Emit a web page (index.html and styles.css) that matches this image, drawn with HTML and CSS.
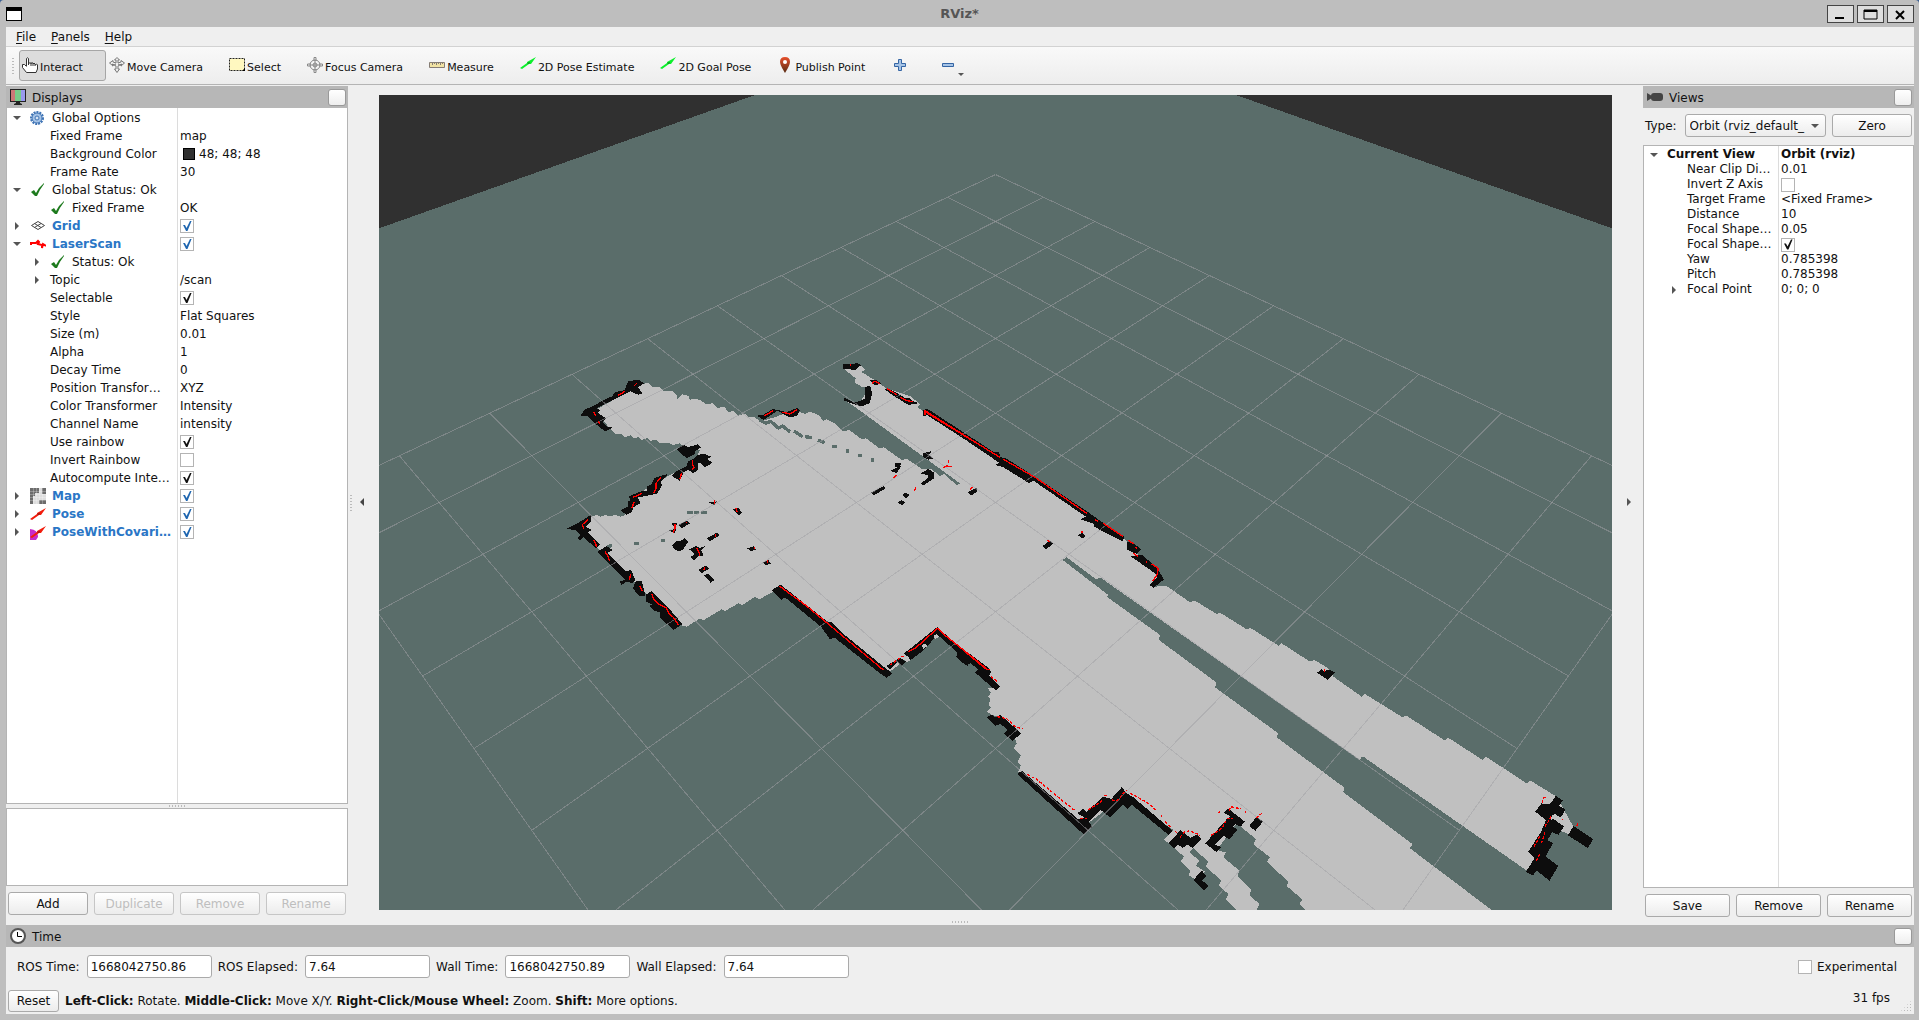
FILE: index.html
```html
<!DOCTYPE html>
<html lang="en">
<head>
  <meta charset="UTF-8">
  <meta name="viewport" content="width=device-width, initial-scale=1.0">
  <title>RViz*</title>
  <link rel="stylesheet" href="styles.css">
</head>
<body>
  <!-- shared icons -->
  <svg class="defs" width="0" height="0" aria-hidden="true">
    <symbol id="i-check" viewBox="0 0 16 16"><path d="M1 10 4 8 6 11Q9 5 14 1L14 2Q10 7 7 14L5 14Z" fill="#1d7a1d"/></symbol>
    <symbol id="i-arrow" viewBox="0 0 16 16"><path d="M0 11 7 6 7 5 16 0 11 7 9 7 2 12Z"/><path d="M7 6 10 5 9 7Z" fill="#222" fill-opacity=".6"/></symbol>
    <symbol id="i-down" viewBox="0 0 12 12"><path d="M2 4H10L6 8Z" fill="#555"/></symbol>
    <symbol id="i-right" viewBox="0 0 12 12"><path d="M4 2V10L8 6Z" fill="#555"/></symbol>
  </svg>

  <div class="window">
    <header class="titlebar">
      <svg class="app-icon" viewBox="0 0 16 14"><path d="M0 0H16V14H0Z"/><path d="M1 4H15V13H1Z" fill="#fff"/></svg>
      <h1>RViz*</h1>
      <div class="win-buttons">
        <button type="button" aria-label="Minimize"><svg viewBox="0 0 24 16"><path d="M7 11H16V13H7Z"/></svg></button>
        <button type="button" aria-label="Maximize"><svg viewBox="0 0 24 16"><path d="M6 4H19V13H6Z" fill="none" stroke="#000"/><path d="M6 4H19V6H6Z"/></svg></button>
        <button type="button" aria-label="Close"><svg viewBox="0 0 24 16"><path d="M8 5 16 13M16 5 8 13" stroke="#000" stroke-width="2"/></svg></button>
      </div>
    </header>

    <div class="client">
      <nav class="menubar">
        <a href="#"><u>F</u>ile</a>
        <a href="#"><u>P</u>anels</a>
        <a href="#"><u>H</u>elp</a>
      </nav>

      <div class="toolbar">
        <span class="grip"></span>
        <button type="button" class="tool active">
          <svg viewBox="0 0 16 16"><path d="M4.500 9V1.500Q5.500 0 6.500 1.500V6H9V7Q9 5 11 6V7Q12 5 13 7V8Q15 6 15.500 8V12L14 15.500H4.500L.5 10.500V7.500H2.500L4.500 9.500M6.500 6V8M9 7V9M11 7V9M13 8V9" fill="#fff" stroke="#333"/></svg>Interact</button>
        <button type="button" class="tool">
          <svg viewBox="0 0 16 16"><path d="M8 .5 10.500 3H9V6L12 5V3.500L15.500 6 12.500 8.500V7L9 9V12H10.500L8 15.500 5.500 12H7V9L3.500 7V8.500L.5 6 4 3.500V5L7 6V3H5.500Z" fill="#eee" stroke="#777"/><path d="M3 9 7 7M13 9 9 7" stroke="#777"/></svg>Move Camera</button>
        <button type="button" class="tool">
          <svg viewBox="0 0 16 16"><path d="M.5 1.500H15.500V13.500H.5Z" fill="#fff8c0" stroke="#222" stroke-dasharray="2 1"/><path d="M13 14H16V11Z"/></svg>Select</button>
        <button type="button" class="tool">
          <svg viewBox="0 0 16 16" fill="none" stroke="#888"><circle cx="8" cy="8" r="5"/><circle cx="8" cy="8" r="2"/><path d="M7 .5H9V4H7ZM7 12H9V15.500H7ZM.5 7H4V9H.5ZM12 7H15.500V9H12ZM8 5V11M5 8H11"/></svg>Focus Camera</button>
        <button type="button" class="tool">
          <svg viewBox="0 0 16 16"><path d="M.5 5.500H15.500V10.500H.5Z" fill="#f1e3a4" stroke="#857c74"/><path d="M3.500 6V8M5.500 6V7M7.500 6V8M9.500 6V7M11.500 6V8M13.500 6V7" stroke="#857c74"/></svg>Measure</button>
        <button type="button" class="tool"><svg viewBox="0 0 16 16" fill="#0cf02c"><use href="#i-arrow"/></svg>2D Pose Estimate</button>
        <button type="button" class="tool"><svg viewBox="0 0 16 16" fill="#0cf02c"><use href="#i-arrow"/></svg>2D Goal Pose</button>
        <button type="button" class="tool">
          <svg viewBox="0 0 16 16"><linearGradient id="pin" x2="0" y2="1"><stop stop-color="#e8502c"/><stop offset="1" stop-color="#552a12"/></linearGradient><path d="M8 0Q13 0 13 5 13 8 8 16 3 8 3 5 3 0 8 0Z" fill="url(#pin)"/><circle cx="8" cy="5" r="2" fill="#fff"/></svg>Publish Point</button>
        <button type="button" class="tool icon-only" aria-label="Add tool"><svg viewBox="0 0 16 16"><path d="M6.500 2.500H9.500V6.500H13.500V9.500H9.500V13.500H6.500V9.500H2.500V6.500H6.500Z" fill="#a5c3e6" stroke="#3465a4"/></svg></button>
        <button type="button" class="tool icon-only menu" aria-label="Remove tool"><svg viewBox="0 0 16 16"><path d="M2.500 6.500H13.500V9.500H2.500Z" fill="#a5c3e6" stroke="#3465a4"/></svg></button>
      </div>

      <main class="work">
        <section class="panel displays">
          <div class="panel-head">
            <svg viewBox="0 0 16 16"><path d="M0 0H16V13H0Z" fill="#222"/><path d="M1 1H5V12H1Z" fill="#c77"/><path d="M5 1H11V12H5Z" fill="#7c8"/><path d="M11 1H15V12H11Z" fill="#99e"/><path d="M6 13H10V14L12 15V16H4V15L6 14Z" fill="#222"/></svg>
            <h2>Displays</h2>
            <button type="button" class="float" aria-label="Float Displays"></button>
          </div>
          <div class="tree">
            <table>
              <colgroup><col class="col-name"><col></colgroup>
              <tr><td><div class="n"><svg class="tw"><use href="#i-down"/></svg><svg class="ic" viewBox="0 0 16 16"><circle cx="7" cy="8" r="5" fill="#a5c3e6" stroke="#3f74b5"/><circle cx="7" cy="8" r="6" fill="none" stroke="#3f74b5" stroke-width="2" stroke-dasharray="2 1"/><circle cx="7" cy="8" r="2" fill="#d5e3f4" stroke="#3f74b5"/></svg>Global Options</div></td><td></td></tr>
              <tr><td><div class="n l2">Fixed Frame</div></td><td>map</td></tr>
              <tr><td><div class="n l2">Background Color</div></td><td><span class="swatch"></span>48; 48; 48</td></tr>
              <tr><td><div class="n l2">Frame Rate</div></td><td>30</td></tr>
              <tr><td><div class="n"><svg class="tw"><use href="#i-down"/></svg><svg class="ic"><use href="#i-check"/></svg>Global Status: Ok</div></td><td></td></tr>
              <tr><td><div class="n l2"><svg class="ic"><use href="#i-check"/></svg>Fixed Frame</div></td><td>OK</td></tr>
              <tr><td><div class="n"><svg class="tw"><use href="#i-right"/></svg><svg class="ic" viewBox="0 0 16 16"><path d="M1.500 7.500 8 3.500 14.500 7.500 8 11.500ZM4.500 5.500 11 9.500M11 5.500 4.500 9.500" fill="none" stroke="#444"/></svg><label for="d-grid" class="disp">Grid</label></div></td><td><input type="checkbox" id="d-grid" class="blue" checked></td></tr>
              <tr><td><div class="n"><svg class="tw"><use href="#i-down"/></svg><svg class="ic" viewBox="0 0 16 16"><path d="M1 9V7H6L8 5 9 6 8 8 12 9V12L13 8 16 10" fill="none" stroke="red" stroke-width="2"/></svg><label for="d-laser" class="disp">LaserScan</label></div></td><td><input type="checkbox" id="d-laser" class="blue" checked></td></tr>
              <tr><td><div class="n l2 open"><svg class="tw"><use href="#i-right"/></svg><svg class="ic"><use href="#i-check"/></svg>Status: Ok</div></td><td></td></tr>
              <tr><td><div class="n l2 open"><svg class="tw"><use href="#i-right"/></svg>Topic</div></td><td>/scan</td></tr>
              <tr><td><div class="n l2"><label for="p-sel">Selectable</label></div></td><td><input type="checkbox" id="p-sel" checked></td></tr>
              <tr><td><div class="n l2">Style</div></td><td>Flat Squares</td></tr>
              <tr><td><div class="n l2">Size (m)</div></td><td>0.01</td></tr>
              <tr><td><div class="n l2">Alpha</div></td><td>1</td></tr>
              <tr><td><div class="n l2">Decay Time</div></td><td>0</td></tr>
              <tr><td><div class="n l2">Position Transfor…</div></td><td>XYZ</td></tr>
              <tr><td><div class="n l2">Color Transformer</div></td><td>Intensity</td></tr>
              <tr><td><div class="n l2">Channel Name</div></td><td>intensity</td></tr>
              <tr><td><div class="n l2"><label for="p-rain">Use rainbow</label></div></td><td><input type="checkbox" id="p-rain" checked></td></tr>
              <tr><td><div class="n l2"><label for="p-inv">Invert Rainbow</label></div></td><td><input type="checkbox" id="p-inv"></td></tr>
              <tr><td><div class="n l2"><label for="p-auto">Autocompute Inte…</label></div></td><td><input type="checkbox" id="p-auto" checked></td></tr>
              <tr><td><div class="n"><svg class="tw"><use href="#i-right"/></svg><svg class="ic" viewBox="0 0 16 16"><path d="M0 0H16V16H0Z" fill="#ddd"/><path d="M0 0H9V5H5V8H3V16H0ZM12 0H16V6H12ZM9 12H16V16H9Z" fill="#6c6c6c"/><path d="M3.500 0V16M6.500 0V16M9.500 0V16M12.500 0V16M0 3.500H16M0 6.500H16M0 9.500H16M0 12.500H16" stroke="#fff" stroke-opacity=".25"/></svg><label for="d-map" class="disp">Map</label></div></td><td><input type="checkbox" id="d-map" class="blue" checked></td></tr>
              <tr><td><div class="n"><svg class="tw"><use href="#i-right"/></svg><svg class="ic" fill="#f21c0c"><use href="#i-arrow" y="2"/></svg><label for="d-pose" class="disp">Pose</label></div></td><td><input type="checkbox" id="d-pose" class="blue" checked></td></tr>
              <tr><td><div class="n"><svg class="tw"><use href="#i-right"/></svg><svg class="ic" viewBox="0 0 16 16" fill="#f21c0c"><path d="M0 5Q8 6 8 12V13L6 16H0Z" fill="#c82cc8"/><use href="#i-arrow" y="2"/></svg><label for="d-cov" class="disp">PoseWithCovari…</label></div></td><td><input type="checkbox" id="d-cov" class="blue" checked></td></tr>
            </table>
          </div>
          <span class="split-h"></span>
          <div class="desc"></div>
          <div class="btn-row">
            <button type="button">Add</button>
            <button type="button" disabled>Duplicate</button>
            <button type="button" disabled>Remove</button>
            <button type="button" disabled>Rename</button>
          </div>
        </section>

        <div class="collapse"><span class="split-v"></span><svg width="12" height="12" viewBox="0 0 12 12"><path d="M8 2V10L4 6Z" fill="#444"/></svg></div>

        <!-- 3D view, three units per pixel -->
        <svg class="view" viewBox="1137 285 3699 2445" preserveAspectRatio="xMidYMid slice" shape-rendering="crispEdges" role="img" aria-label="3D view">
          <path d="M1137 285H4836V2730H1137Z" fill="#5a6d6a"/>
          <path d="M1137 285H2265L1137 685ZM4836 285H3708L4836 685Z" fill="#303030"/>

          <!-- free space -->
          <g fill="#c0c0c0">
            <path transform="translate(1680 1050)" d="M240 105 265 97 275 110 300 112 308 122 335 122 350 134 352 146 368 133 385 138 390 150 402 146 420 150 438 162 458 160 472 174 492 170 505 185 520 184 535 198 552 190 565 200 585 202 600 214 650 200 700 178 735 192 750 185 775 195 790 212 800 208 825 220 850 244 868 240 905 268 918 265 960 296 972 292 1025 330 1040 326 1085 356 1115 358 1140 378 1152 372 1190 405 1200 400 878 166 860 155 895 165 930 110 905 110 883 97 887 85 850 55 865 45 900 45 915 58 905 66 940 88 965 105 980 116 1050 138 1082 164 1072 170 1095 190 1320 330 1320 985 1132 840 1100 880 1035 930 990 965 975 965 658 712 640 725 598 748 585 740 548 765 535 760 495 783 485 778 430 811 420 805 380 830 360 825 50 535 95 500 110 494 122 500 135 495 150 500 165 495 180 500 190 497 200 490 220 440 330 375 400 340 420 300 370 292 358 280 340 285 325 278 300 280 290 270 270 272 262 264 245 270 235 262 220 265 212 256 195 262 185 252 165 252 150 235 110 190 115 175Z"/>
            <path transform="translate(2520 1020)" d="M440 325 740 515 850 592 900 650 965 705 940 740 980 738 1050 787 1065 782 1130 822 1140 818 1220 868 1232 864 1320 920V1091L780 712 768 718 680 652 668 660 805 765 800 770 960 885 957 900 1130 1030H480L400 955 292 862 400 400Z"/>
            <path transform="translate(2880 1800)" d="M0 150V60L600 105 597 120 770 248 765 262 955 400 950 412 1152 562 1150 577 1357 732 1350 745 1595 930H1037L1018 912 1027 898 980 858 985 845 920 785 930 772 880 733 888 717 830 670 770 750 797 757 790 772 838 812 832 828 875 870 868 885 898 912 890 930H830L797 898 805 882 775 856 785 842 737 800 745 785 700 745 688 757 718 782 708 797 735 815 710 840 685 825 692 812 662 785 672 770 612 718 640 690 490 590 370 680 360 670 175 515 183 495 173 485 183 465 160 445 170 430 160 400 120 350 95 345 82 335 92 322 85 312 92 300 85 290 92 278 85 265 105 262 40 190Z"/>
            <path transform="translate(3540 1680)" d="M280 247 295 257 305 250 390 305 403 300 445 325 460 350 545 410 555 402 668 472 678 466 795 542 803 532 908 600 918 590 1040 670 1050 661 1130 710 1180 800 1165 822 1110 800 1045 935 553 592 543 592 540 600 280 417Z"/>
          </g>
          <!-- unknown pockets -->
          <g transform="translate(1680 1050)" fill="none" stroke="#5a6d6a" stroke-width="10">
            <path d="M598 210 618 220 632 214 655 234 668 228 690 246M702 243 728 260M736 260 757 263M774 270 794 278M819 290H828M815 290 832 290M857 303H866M894 317H905M932 330H942M380 487H398M402 487H418M424 487H440M222 580H237M303 572H315M142 590 156 587"/>
          </g>

          <!-- occupied cells -->
          <g fill="#0d0d0d" stroke="#0d0d0d" stroke-width="3">
            <g transform="translate(1680 1050)">
              <path d="M64 195 75 180 100 170 130 152 158 140 165 128 195 122 205 96 235 90 250 100 232 112 245 130 235 133 212 122 160 148 105 175 118 180 112 190 135 205 125 215 140 232 157 232 135 243 118 228 100 215 85 198Z"/>
              <path d="M352 298 370 285 385 293 412 285 420 292 402 305 403 312 380 322 362 308ZM412 318 430 312 450 320 440 328 455 338 435 350 420 335 412 340 414 358 400 368 385 358 370 365 358 390 338 378 350 365 380 350 385 335 400 328Z"/>
              <path d="M184 482 205 470 205 455 215 452 208 440 245 425 262 425 262 410 275 405 285 385 320 374 300 395 305 405 290 430 230 442 240 458 218 472 215 485 200 493Z"/>
              <path d="M24 535 60 517 92 497 92 515 75 530 92 540 80 546 118 585 108 592 70 560 60 570 55 565 65 555 48 540ZM115 605 140 590 155 600 140 608 195 665 212 662 225 690 215 698 200 693 185 703 182 695 200 690 130 620ZM228 695 245 695 248 712 255 735 240 738 220 715ZM258 735 275 725 290 740 320 770 365 822 340 838 300 800 300 785 285 782 270 768 280 765 258 752Z"/>
              <path d="M595 198 612 195 640 178 650 182 610 208ZM655 182 680 188 712 175 718 182 710 197 688 200ZM850 55 852 42 872 45 892 40 900 46 885 58ZM855 145 880 158 900 155 915 148 915 112 930 110 935 130 928 158 905 168 885 162 852 150Z"/>
              <path d="M932 92 945 90 960 100 945 104ZM976 118 985 117 1045 150 1072 160 1045 163 1000 135ZM1018 138 1040 140 1062 158 1040 155Z"/>
              <path d="M995 362 1020 350 1010 368ZM1005 342 1022 340 1018 350 1008 350ZM936 428 970 410 974 415 942 434ZM1028 435 1037 430 1046 435 1038 442ZM1015 457 1024 452 1034 457 1026 464ZM1090 312 1112 305 1105 315 1115 325 1105 328 1090 320ZM1086 370 1105 358 1120 368 1120 385 1090 405 1086 400 1108 382 1105 374ZM1225 428 1248 415 1250 424 1235 434Z"/>
              <path d="M450 457 468 456 462 463ZM520 478 535 476 545 488 538 494ZM358 525 380 513 388 520 366 532ZM336 522 350 520 345 530ZM332 542 348 538 342 548ZM338 586 350 574 365 573 375 566 382 576 368 598 355 602 342 595ZM390 598 408 590 420 595 430 592 422 602 428 615 412 618 402 628 394 622 405 612ZM442 566 470 550 476 556 450 572ZM418 660 438 648 446 655 425 668ZM434 676 445 674 462 690 452 696ZM565 596 580 591 585 598 572 602ZM612 637 625 632 630 640 618 644Z"/>
              <path d="M638 720 662 706 800 815 818 820 840 845 978 958 995 970 980 982 965 972 825 862 810 865 785 830 675 740 665 748Z"/>
              <path d="M982 948 1020 925 1035 935 1025 945 1012 935 990 956ZM1035 910 1132 833 1200 895 1228 912 1285 955 1260 960 1235 935 1218 945 1190 920 1195 908 1132 852 1090 900 1050 930Z"/>
            </g>
            <g transform="translate(2520 1020)">
              <path d="M250 212 262 208 460 337 475 338 480 352 500 358 585 412 740 515 775 540 850 590 848 602 765 560 762 550 725 538 740 530 580 420 568 428 490 380 470 375 480 368 380 300 262 224 250 228ZM862 606 880 612 902 628 890 640 862 628ZM876 650 905 645 950 685 970 718 940 742 932 735 955 712 945 698ZM610 618 630 604 637 612 618 626ZM717 586 726 580 735 588 726 594Z"/>
            </g>
            <g transform="translate(2880 1800)">
              <path d="M0 145 45 180 75 205 92 215 85 228 118 260 108 270 48 218 55 208 30 185 22 195 0 180ZM82 352 95 345 105 355 120 346 182 400 158 420 133 400 145 390 122 370 106 376Z"/>
              <path d="M174 522 185 514 355 660 378 652 355 640 368 628 380 637 430 592 455 598 485 564 500 582 518 592 635 692 625 702 515 612 502 625 490 612 450 650 422 628 385 665 395 680 372 702Z"/>
              <path d="M628 730 662 692 690 715 710 706 722 718 698 742 682 732 668 742 655 732 642 744ZM738 730 800 660 815 650 795 638 805 628 852 665 842 678 825 670 818 680 830 690 808 716 790 705 762 735 782 742 770 755ZM870 678 890 652 907 665 886 690ZM702 840 725 814 738 828 725 842 743 857 732 868Z"/>
              <path d="M1074 218 1085 210 1095 216 1105 210 1122 218 1103 237Z"/>
            </g>
            <g transform="translate(3540 1680)">
              <path d="M1068 755 1085 732 1110 735 1128 710 1146 722 1135 738 1155 748 1142 770 1112 768 1110 785 1120 778 1150 800 1135 822 1115 815 1100 842 1117 850 1095 890 1133 918 1108 960 1070 930 1058 945 1040 935 1065 895 1047 875 1085 815 1100 780ZM1180 800 1238 838 1223 862 1165 825Z"/>
            </g>
          </g>
          <g fill="#c0c0c0">
            <path transform="translate(1680 1050)" d="M1085 885 1095 880 1102 888 1090 897ZM1120 858 1130 852 1138 860 1125 868ZM1030 925 1042 918 1052 930 1040 938ZM1028 140 1035 135 1045 142 1035 146Z"/>
            <path transform="translate(3540 1680)" d="M1115 768 1125 762 1180 800 1165 823 1148 812 1152 800Z"/>
          </g>

          <!-- 10 x 10 grid, perspective from the orbit camera -->
          <g transform="translate(1137 285)" fill="none" stroke="#a0a0a4" stroke-opacity=".5" stroke-width="3">
            <path id="grid-half" d="M1850 239 3936 1223M1706 307 3827 1378M1551 379 3704 1550M1386 457 3568 1743M1208 542 3415 1961M1015 632 3241 2206M806 731 3042 2487M579 838 2813 2812M332 954 2545 3190M61 1082 2229 3637M-237 1223 1850 4174"/>
            <use href="#grid-half" transform="translate(3699 0) scale(-1 1)"/>
          </g>

          <!-- laser returns -->
          <g fill="none" stroke="red" stroke-width="4">
            <g transform="translate(1680 1050)">
              <path d="M175 136 195 124M222 108 232 98M100 185 108 197M115 215 120 220M398 330V345L402 352 396 358M365 368 360 386M302 382 288 400V415L280 430M245 430 220 442M222 456 216 474M84 508 66 525 72 535M102 570 110 590M135 605 142 615 148 632M212 672 208 690M240 708 247 722M275 732 282 748 298 764 320 775 325 788 340 802 356 826"/>
              <path d="M612 198 640 182M665 186 690 192 712 178M872 42V48M935 100 945 94 960 102M980 115 1010 134M1020 142 1035 150 1060 156M1095 182V195M1095 185 1320 322"/>
              <path d="M463 450V462M528 475 532 486M345 522V535L340 548M378 516 382 520M410 595 418 608V618M466 552V562M435 650 432 660M583 592V598M622 630V640M1000 385 1010 374M1068 412 1063 422M1165 330V340M1150 352 1160 348 1175 350M1230 418 1238 412"/>
              <path d="M658 708 740 768 800 818 970 960M1045 905 1065 895 1085 878 1132 835 1160 860 1228 914 1282 958" /><path d="M990 945 1030 918" stroke-dasharray="8 6"/>
            </g>
            <g transform="translate(2520 1020)">
              <path d="M255 210V226M258 214 460 340M490 358 585 412 740 520M765 540 775 544M790 550 850 590M865 600 880 612M885 622 892 626M880 640 895 650M918 664 922 668M935 672 955 685 950 708 938 722M622 600 630 606M726 574V580"/>
            </g>
            <g transform="translate(2880 1800)">
              <path d="M0 142 75 205 88 210"/>
              <path d="M92 230 114 246M112 350 140 356 165 380 188 386M202 524 230 538 300 596 345 632M360 655H380M385 630 430 600M432 586H444M455 600 470 602 500 570M510 580 560 606 590 632M603 646 606 650M615 665 632 680M646 694 650 698M660 712 672 696 690 692 720 706M754 706 785 685 798 664M800 656H820M808 632 812 620 842 626M855 636H858M775 640 780 634M888 654 908 638M1094 216V208L1100 204" stroke-dasharray="9 5"/>
            </g>
            <g transform="translate(3540 1680)">
              <path d="M1088 728V714L1098 712M1112 768 1110 778 1090 805M1095 815 1085 848M1080 828 1062 860M1080 882 1068 906M1145 778H1150M1190 798 1193 790" stroke-dasharray="9 5"/>
            </g>
          </g>
        </svg>

        <div class="collapse right"><svg width="12" height="12"><use href="#i-right"/></svg></div>

        <section class="panel views">
          <div class="panel-head">
            <svg viewBox="0 0 16 16"><path d="M0 4 5 7V9L0 12Z" fill="#444"/><rect x="4" y="4" width="12" height="8" rx="3" fill="#444"/></svg>
            <h2>Views</h2>
            <button type="button" class="float" aria-label="Float Views"></button>
          </div>
          <div class="type-row">
            <label for="view-type">Type:</label>
            <span class="combo"><select id="view-type"><option>Orbit (rviz_default_</option></select></span>
            <button type="button" class="zero">Zero</button>
          </div>
          <div class="tree">
            <table>
              <colgroup><col class="col-name"><col></colgroup>
              <tr><td><div class="n"><svg class="tw"><use href="#i-down"/></svg><b>Current View</b></div></td><td><b>Orbit (rviz)</b></td></tr>
              <tr><td><div class="n l2">Near Clip Di…</div></td><td>0.01</td></tr>
              <tr><td><div class="n l2"><label for="v-inv">Invert Z Axis</label></div></td><td><input type="checkbox" id="v-inv"></td></tr>
              <tr><td><div class="n l2">Target Frame</div></td><td>&lt;Fixed Frame&gt;</td></tr>
              <tr><td><div class="n l2">Distance</div></td><td>10</td></tr>
              <tr><td><div class="n l2">Focal Shape…</div></td><td>0.05</td></tr>
              <tr><td><div class="n l2"><label for="v-fix">Focal Shape…</label></div></td><td><input type="checkbox" id="v-fix" checked></td></tr>
              <tr><td><div class="n l2">Yaw</div></td><td>0.785398</td></tr>
              <tr><td><div class="n l2">Pitch</div></td><td>0.785398</td></tr>
              <tr><td><div class="n l2 open"><svg class="tw"><use href="#i-right"/></svg>Focal Point</div></td><td>0; 0; 0</td></tr>
            </table>
          </div>
          <div class="btn-row">
            <button type="button">Save</button>
            <button type="button">Remove</button>
            <button type="button">Rename</button>
          </div>
        </section>
      </main>

      <span class="split-h dock-split"></span>

      <section class="time">
        <div class="panel-head">
          <svg viewBox="0 0 16 16"><circle cx="8" cy="8" r="7" fill="#fff" stroke="#555" stroke-width="2"/><path d="M7.500 4V8.500H12" fill="none" stroke="#000"/></svg>
          <h2>Time</h2>
          <button type="button" class="float" aria-label="Float Time"></button>
        </div>
        <div class="time-row">
          <label for="ros-time">ROS Time:</label><input type="text" id="ros-time" value="1668042750.86" readonly>
          <label for="ros-elapsed">ROS Elapsed:</label><input type="text" id="ros-elapsed" value="7.64" readonly>
          <label for="wall-time">Wall Time:</label><input type="text" id="wall-time" value="1668042750.89" readonly>
          <label for="wall-elapsed">Wall Elapsed:</label><input type="text" id="wall-elapsed" value="7.64" readonly>
          <span class="exp"><input type="checkbox" id="exp"><label for="exp">Experimental</label></span>
        </div>
      </section>

      <footer class="status">
        <button type="button">Reset</button>
        <p><b>Left-Click:</b> Rotate. <b>Middle-Click:</b> Move X/Y. <b>Right-Click/Mouse Wheel:</b> Zoom. <b>Shift:</b> More options.</p>
        <span class="fps">31 fps</span>
        <span class="size-grip"></span>
      </footer>
    </div>
  </div>
</body>
</html>
```
FILE: styles.css
```css
* {
  box-sizing: border-box;
}
body {
  margin: 0;
  background: #3b5f92;
  color: #111;
  font-family: "DejaVu Sans", sans-serif;
  font-size: 12px;
}
.defs {
  position: absolute;
}
.window {
  min-height: 100vh;
  display: flex;
  flex-direction: column;
  background: #bebebe;
  border-radius: 4px 4px 0 0;
  padding: 0 5px 6px 6px;
}
.titlebar {
  height: 27px;
  display: flex;
  align-items: center;
}
.app-icon {
  width: 16px;
  height: 14px;
  flex: none;
}
.titlebar h1 {
  flex: 1;
  margin: 0 0 0 70px;
  font-size: 13px;
  text-align: center;
  color: #555;
}
.win-buttons {
  display: flex;
  gap: 3px;
}
.win-buttons button {
  width: 27px;
  height: 18px;
  padding: 0;
  border: 1px solid #444;
  border-radius: 0;
  background: #dedede;
}
.win-buttons svg {
  display: block;
  width: 24px;
  height: 16px;
}
.client {
  flex: 1;
  display: flex;
  flex-direction: column;
  background: #efefef;
}

/* menu and tools */
.menubar {
  height: 19px;
  padding-left: 10px;
  display: flex;
  align-items: center;
  gap: 15px;
}
.menubar a {
  color: #111;
  text-decoration: none;
}
.menubar u {
  text-underline-offset: 2px;
}
.toolbar {
  height: 39px;
  display: flex;
  align-items: center;
  border-top: 1px solid #d2d2d2;
  border-bottom: 1px solid #b4b4b4;
  background: linear-gradient(#f9f9f9, #ededed);
}
.grip {
  width: 4px;
  height: 17px;
  margin: 0 4px 0 5px;
  background: radial-gradient(#bbb 1px, transparent 1px) 0 0 / 4px 3px;
}
button {
  font: inherit;
  color: #111;
}
.tool {
  height: 31px;
  display: flex;
  align-items: center;
  gap: 2px;
  padding: 3px 22px 0 2px;
  border: 1px solid transparent;
  border-radius: 3px;
  background: none;
  font-size: 11px;
}
.tool.active {
  background: #dcdcdc;
  border-color: #a6a6a6;
}
.tool svg {
  width: 16px;
  height: 16px;
  margin-bottom: 4px;
}
.icon-only {
  padding-left: 3px;
  padding-right: 27px;
}
.icon-only.menu {
  padding-right: 2px;
}
.menu::after {
  content: "";
  margin-top: 14px;
  border: 3px solid transparent;
  border-top-color: #555;
  border-bottom: 0;
}

/* docks */
.work {
  flex: 1;
  display: flex;
}
.panel {
  display: flex;
  flex-direction: column;
  padding-top: 1px;
}
.displays {
  width: 342px;
}
.views {
  width: 271px;
}
.panel-head {
  height: 22px;
  flex: none;
  display: flex;
  align-items: center;
  padding: 0 2px 0 4px;
  background: #b7b7b7;
}
.panel-head svg {
  width: 16px;
  height: 16px;
}
.panel-head h2 {
  flex: 1;
  margin: 0 0 0 6px;
  padding-top: 1px;
  font-size: 12px;
  font-weight: normal;
}
.float {
  width: 18px;
  height: 17px;
  padding: 0;
  border: 1px solid #999;
  border-radius: 3px;
  background: linear-gradient(#fff, #eee);
}
.tree {
  flex: 1;
  border: 1px solid #b4b4b4;
  background: linear-gradient(#dcdcdc, #dcdcdc) 170px 0 / 1px 100% no-repeat #fff;
}
.displays .tree {
  border-top: 0;
}
.views .tree {
  background-position: 134px 0;
}
.tree table {
  width: 100%;
  margin-top: 1px;
  table-layout: fixed;
  border-collapse: collapse;
}
.col-name {
  width: 171px;
}
.views .col-name {
  width: 135px;
}
.tree td {
  height: 18px;
  line-height: 18px;
  padding: 0 0 0 2px;
  white-space: nowrap;
}
.tree td:first-child {
  padding: 0;
}
.views .tree td {
  height: 15px;
  line-height: 15px;
}
.n {
  display: flex;
  align-items: center;
  padding-left: 4px;
  overflow: hidden;
}
.n.l2 {
  padding-left: 43px;
}
.n.open {
  padding-left: 24px;
}
.tw {
  width: 12px;
  height: 12px;
  flex: none;
  margin-right: 7px;
}
.ic {
  width: 16px;
  height: 16px;
  flex: none;
  margin-right: 6px;
}
.disp {
  font-weight: bold;
  color: #2a76c6;
}
.swatch {
  display: inline-block;
  width: 12px;
  height: 12px;
  margin: 0 4px 0 3px;
  border: 1px solid #000;
  background: #303030;
  vertical-align: -2px;
}
input[type="checkbox"] {
  appearance: none;
  display: block;
  flex: none;
  width: 14px;
  height: 14px;
  margin: 0;
  border: 1px solid #b4b4b4;
  background: #fff;
}
input[type="checkbox"]:checked::before {
  content: "";
  display: block;
  width: 12px;
  height: 12px;
  background: #111;
  clip-path: polygon(17% 42%, 33% 42%, 46% 66%, 75% 8%, 88% 8%, 54% 92%, 42% 92%);
}
input.blue:checked::before {
  background: #1f66b0;
}
.split-h {
  height: 4px;
  width: 18px;
  align-self: center;
  background: radial-gradient(#bbb 1px, transparent 1px) 0 0 / 3px 4px;
}
.desc {
  height: 78px;
  border: 1px solid #b4b4b4;
  background: #fff;
}
.btn-row {
  display: flex;
  gap: 6px;
  padding: 6px 2px 0;
}
.displays .btn-row {
  padding-bottom: 4px;
}
.views .btn-row {
  padding-bottom: 2px;
}
.btn-row button,
.zero,
.status button,
.combo select {
  height: 23px;
  padding: 0;
  border: 1px solid #aaa;
  border-radius: 3px;
  background: linear-gradient(#fff, #ececec);
}
.btn-row button {
  flex: 1;
}
button:disabled {
  color: #bebebe;
  border-color: #c6c6c6;
}
.collapse {
  width: 31px;
  display: flex;
  align-items: center;
}
.collapse svg {
  margin-left: 3px;
}
.collapse.right svg {
  margin-left: 11px;
}
.split-v {
  width: 4px;
  height: 17px;
  margin-left: 1px;
  background: radial-gradient(#bbb 1px, transparent 1px) 0 0 / 4px 3px;
}
.view {
  flex: 1;
  min-width: 0;
  height: auto;
  margin: 10px 0 9px;
}
.type-row {
  display: flex;
  align-items: center;
  padding: 6px 2px 8px;
}
.combo {
  position: relative;
  flex: 1;
  margin: 0 6px 0 8px;
}
.combo select {
  appearance: none;
  display: block;
  width: 100%;
  padding-left: 4px;
  font: inherit;
  color: #111;
}
.combo::after {
  content: "";
  position: absolute;
  right: 7px;
  top: 10px;
  border: 4px solid transparent;
  border-top-color: #555;
  border-bottom: 0;
}
.zero {
  width: 80px;
}

/* time and status */
.dock-split {
  height: 6px;
  background-position: 0 1px;
}
.time-row {
  display: flex;
  align-items: center;
  padding: 8px 17px 0 11px;
}
.time-row input[type="text"] {
  width: 125px;
  height: 23px;
  margin: 0 6px 0 7px;
  padding: 0 3px;
  border: 1px solid #aaa;
  border-radius: 3px;
  background: #fff;
  font: inherit;
  color: #111;
}
.exp {
  display: flex;
  align-items: center;
  gap: 5px;
  margin-left: auto;
}
.status {
  display: flex;
  align-items: center;
  padding: 12px 2px 2px;
}
.status button {
  width: 51px;
  height: 22px;
}
.status p {
  margin: 0 0 0 6px;
}
.fps {
  margin: 0 10px 6px auto;
}
.size-grip {
  width: 12px;
  height: 12px;
  align-self: flex-end;
  background: radial-gradient(#bbb 1px, transparent 1px) 0 0 / 3px 3px;
  clip-path: polygon(100% 0, 100% 100%, 0 100%);
}
```
